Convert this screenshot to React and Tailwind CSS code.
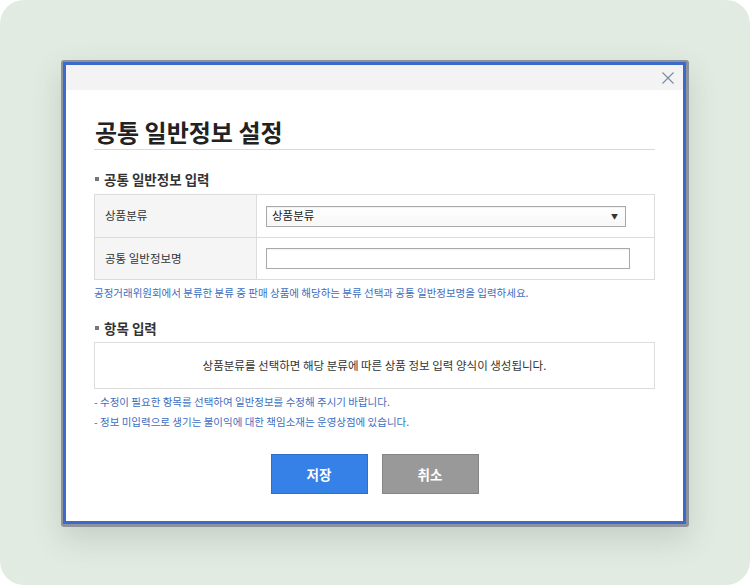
import React from "react";

const font = { fontFamily: '"Noto Sans CJK KR", "Noto Sans", sans-serif' };

export default function App() {
  return (
    <div className="w-[750px] h-[585px] bg-white" style={font}>
      <div className="w-[750px] h-[585px] rounded-[24px] bg-[#e2ebe2] pl-[61px] pt-[60px]">
        <div className="w-[628px] rounded-[3px] bg-[#8d939b] pl-[2px] pt-[2px] pr-[3px] pb-[3px] shadow-[0_12px_30px_rgba(60,80,60,0.18)]">
          <div className="border-[3px] border-[#3d69cc] bg-white">
            {/* header bar */}
            <div className="h-[25px] bg-[#f3f3f3] flex items-center justify-end pr-[7px]">
              <svg width="14" height="14" viewBox="0 0 14 14" className="mr-[1px] mt-[1px]">
                <path d="M1.5 1.5 L12.5 12.5 M12.5 1.5 L1.5 12.5" stroke="#7b8aa2" strokeWidth="1.1" fill="none" />
              </svg>
            </div>
            {/* body */}
            <div className="px-[28px] pt-[28px] pb-[27px]">
              <div className="border-b border-[#d9d9d9] pb-[3px]">
                <h1 className="text-[24px] leading-[28px] font-bold text-[#222] pl-[1px]">공통 일반정보 설정</h1>
              </div>

              <div className="mt-[21px] flex items-center h-[16px] pl-[1px]">
                <span className="w-[4px] h-[4px] bg-[#777] mr-[5px]"></span>
                <span className="text-[13.5px] leading-[16px] font-bold text-[#333]">공통 일반정보 입력</span>
              </div>

              <table className="mt-[7px] w-full border-collapse border border-[#dcdcdc]">
                <tbody>
                  <tr className="h-[43px]">
                    <td className="w-[162px] bg-[#f5f5f5] border border-[#dcdcdc] pl-[10px] text-[11.5px] text-[#333]">상품분류</td>
                    <td className="border border-[#dcdcdc] pl-[9px]">
                      <div className="w-[360px] h-[21px] border border-[#a9a9a9] bg-gradient-to-b from-white to-[#f7f7f7] flex items-center justify-between pl-[5px] pr-[7px] shadow-[inset_0_1px_1px_rgba(0,0,0,0.06)]">
                        <span className="text-[11.5px] text-[#222] leading-none">상품분류</span>
                        <span className="text-[7px] text-[#333] leading-none">▼</span>
                      </div>
                    </td>
                  </tr>
                  <tr className="h-[42px]">
                    <td className="w-[162px] bg-[#f5f5f5] border border-[#dcdcdc] pl-[10px] text-[11.5px] text-[#333]">공통 일반정보명</td>
                    <td className="border border-[#dcdcdc] pl-[9px]">
                      <div className="w-[364px] h-[21px] border border-[#a9a9a9] bg-white shadow-[inset_0_1px_1px_rgba(0,0,0,0.06)]"></div>
                    </td>
                  </tr>
                </tbody>
              </table>

              <p className="mt-[6px] text-[10.5px] leading-[14px] text-[#3d6ec0]">
                공정거래위원회에서 분류한 분류 중 판매 상품에 해당하는 분류 선택과 공통 일반정보명을 입력하세요.
              </p>

              <div className="mt-[20px] flex items-center h-[16px] pl-[1px]">
                <span className="w-[4px] h-[4px] bg-[#777] mr-[5px]"></span>
                <span className="text-[13.5px] leading-[16px] font-bold text-[#333]">항목 입력</span>
              </div>

              <div className="mt-[6px] h-[47px] border border-[#dcdcdc] flex items-center justify-center text-[11.5px] text-[#333]">
                상품분류를 선택하면 해당 분류에 따른 상품 정보 입력 양식이 생성됩니다.
              </div>

              <div className="mt-[3px] text-[10.5px] leading-[20px] text-[#3d6ec0]">
                <p>- 수정이 필요한 항목를 선택하여 일반정보를 수정해 주시기 바랍니다.</p>
                <p>- 정보 미입력으로 생기는 불이익에 대한 책임소재는 운영상점에 있습니다.</p>
              </div>

              <div className="mt-[22px] flex justify-center gap-[14px]">
                <button className="w-[97px] h-[40px] bg-[#3581e8] border border-[#2f6fc9] text-white text-[13.5px] font-bold">저장</button>
                <button className="w-[97px] h-[40px] bg-[#999999] border border-[#858585] text-white text-[13.5px] font-bold">취소</button>
              </div>
            </div>
          </div>
        </div>
      </div>
    </div>
  );
}
